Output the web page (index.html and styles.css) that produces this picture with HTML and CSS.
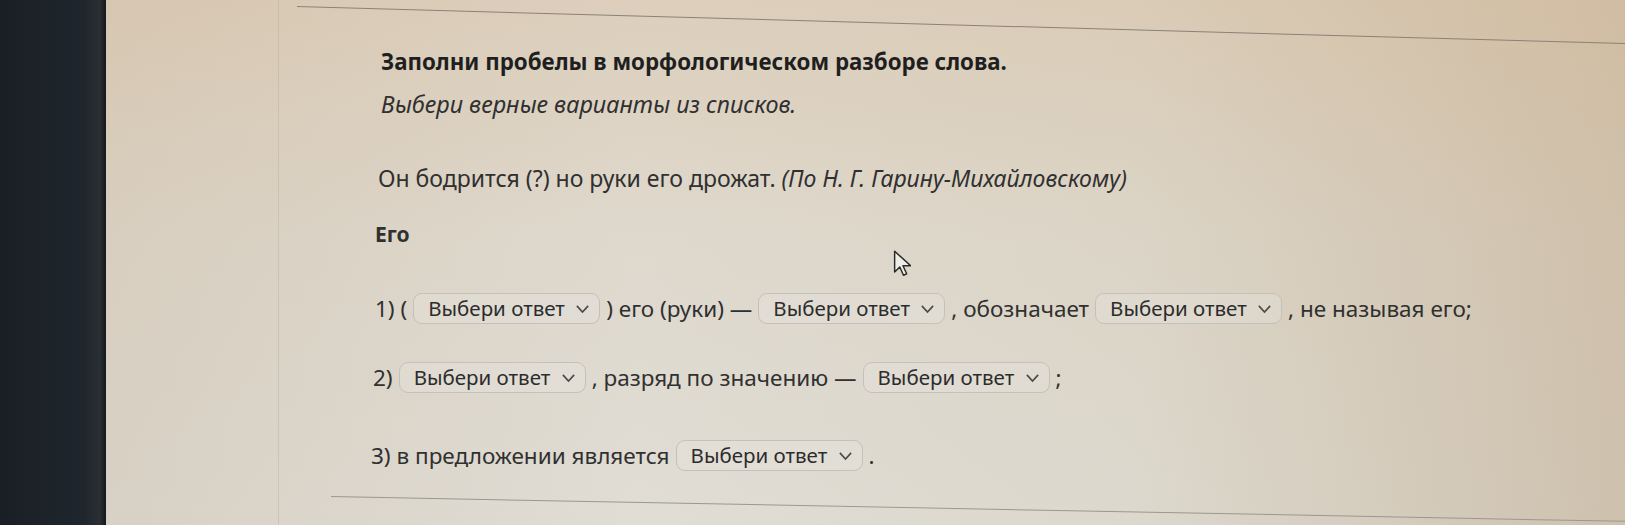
FILE: index.html
```html
<!DOCTYPE html>
<html lang="ru">
<head>
<meta charset="utf-8">
<title>Морфологический разбор</title>
<link rel="stylesheet" href="styles.css">
</head>
<body>
<div class="screen">
  <div class="bezel"></div>
  <div class="page">
    <div class="side"></div>
    <div class="content">
      <div class="task">
        <h1 class="title">Заполни пробелы в морфологическом разборе слова.</h1>
        <p class="hint">Выбери верные варианты из списков.</p>
        <p class="sentence">Он бодрится (?) но руки его дрожат. <i>(По Н. Г. Гарину-Михайловскому)</i></p>
        <p class="word">Его</p>
        <div class="row">
          <span>1) (</span>
          <span class="select">Выбери ответ<svg class="chev" viewBox="0 0 12 8"><path d="M1.5 1.5 6 6.5l4.5-5"/></svg></span>
          <span>) его (руки) —</span>
          <span class="select">Выбери ответ<svg class="chev" viewBox="0 0 12 8"><path d="M1.5 1.5 6 6.5l4.5-5"/></svg></span>
          <span>, обозначает</span>
          <span class="select">Выбери ответ<svg class="chev" viewBox="0 0 12 8"><path d="M1.5 1.5 6 6.5l4.5-5"/></svg></span>
          <span>, не называя его;</span>
        </div>
        <div class="row r2">
          <span>2)</span>
          <span class="select">Выбери ответ<svg class="chev" viewBox="0 0 12 8"><path d="M1.5 1.5 6 6.5l4.5-5"/></svg></span>
          <span>, разряд по значению —</span>
          <span class="select">Выбери ответ<svg class="chev" viewBox="0 0 12 8"><path d="M1.5 1.5 6 6.5l4.5-5"/></svg></span>
          <span>;</span>
        </div>
        <div class="row r3">
          <span>3) в предложении является</span>
          <span class="select">Выбери ответ<svg class="chev" viewBox="0 0 12 8"><path d="M1.5 1.5 6 6.5l4.5-5"/></svg></span>
          <span>.</span>
        </div>
      </div>
      <svg class="cursor" viewBox="0 0 14 22" width="18" height="27"><path d="M1 1v17l4.2-4.2 3 6.8 2.6-1.2-3-6.6H14z"/></svg>
    </div>
  </div>
</div>
</body>
</html>
```

FILE: styles.css
```css
html, body {
  margin: 0;
  padding: 0;
  height: 100%;
  overflow: hidden;
}
body {
  font-family: "Noto Sans", "Open Sans", sans-serif;
  color: #303030;
}
.screen {
  display: flex;
  width: 1625px;
  height: 525px;
}
.bezel {
  width: 106px;
  flex: none;
  background: linear-gradient(90deg, #1a1f25 0%, #1f262d 80%, #2a2f33 94%, #15191d 100%);
}
.page {
  flex: 1;
  display: flex;
  background:
    linear-gradient(180deg, rgba(214, 180, 140, 0.35) 0%, rgba(214, 186, 150, 0.12) 45%, rgba(200, 200, 200, 0) 100%),
    linear-gradient(90deg, #d8d1c5 0%, #e0ddd5 35%, #dcd8cd 68%, #cec1ae 100%);
}
.side {
  width: 172px;
  flex: none;
  border-right: 1px solid rgba(150, 140, 125, 0.22);
}
.content {
  flex: 1;
  position: relative;
  margin-left: 18px;
  display: flex;
  flex-direction: column;
}
.content::before {
  content: "";
  position: absolute;
  left: 0;
  right: -40px;
  top: 6px;
  height: 1px;
  background: #8a8277;
  transform-origin: left center;
  transform: rotate(1.6deg);
}
.task {
  position: relative;
  margin-left: 34px;
  padding-left: 50px;
  padding-top: 13px;
  padding-bottom: 26px;
}
.task::after {
  content: "";
  position: absolute;
  left: 0;
  right: -40px;
  bottom: 0;
  height: 1px;
  background: #9c978f;
  transform-origin: left center;
  transform: rotate(1.1deg);
}
.title {
  margin: 34px 0 0;
  font-size: 22.3px;
  font-weight: 700;
  color: #1f1f1f;
  line-height: 30px;
}
.hint {
  margin: 12px 0 0;
  font-size: 23.4px;
  font-style: italic;
  line-height: 30px;
}
.sentence {
  margin: 44px 0 0;
  font-size: 23px;
  line-height: 30px;
  margin-left: -3px;
}
.word {
  margin: 26px 0 0;
  margin-left: -6px;
  font-size: 21px;
  font-weight: 700;
  line-height: 30px;
}
.row {
  display: flex;
  align-items: center;
  gap: 6px;
  font-size: 22.5px;
  line-height: 31px;
  margin-top: 44px;
  margin-left: -6px;
}
.row.r2 {
  margin-top: 38px;
  margin-left: -8px;
}
.row.r3 {
  margin-top: 47px;
  margin-left: -10px;
}
.select {
  display: inline-flex;
  align-items: center;
  justify-content: space-between;
  box-sizing: border-box;
  width: 187px;
  height: 31px;
  padding: 0 9px 0 14px;
  border: 1px solid #c4c1ba;
  border-radius: 9px;
  background: rgba(232, 230, 224, 0.35);
  font-size: 20.5px;
  color: #2c2c2c;
}
.chev {
  width: 15px;
  height: 10px;
  fill: none;
  stroke: #4a4a4a;
  stroke-width: 1.3;
}
.cursor {
  position: absolute;
  left: 596px;
  top: 250px;
  fill: #efede8;
  stroke: #2a2a2a;
  stroke-width: 1.2;
  stroke-linejoin: round;
}
```
